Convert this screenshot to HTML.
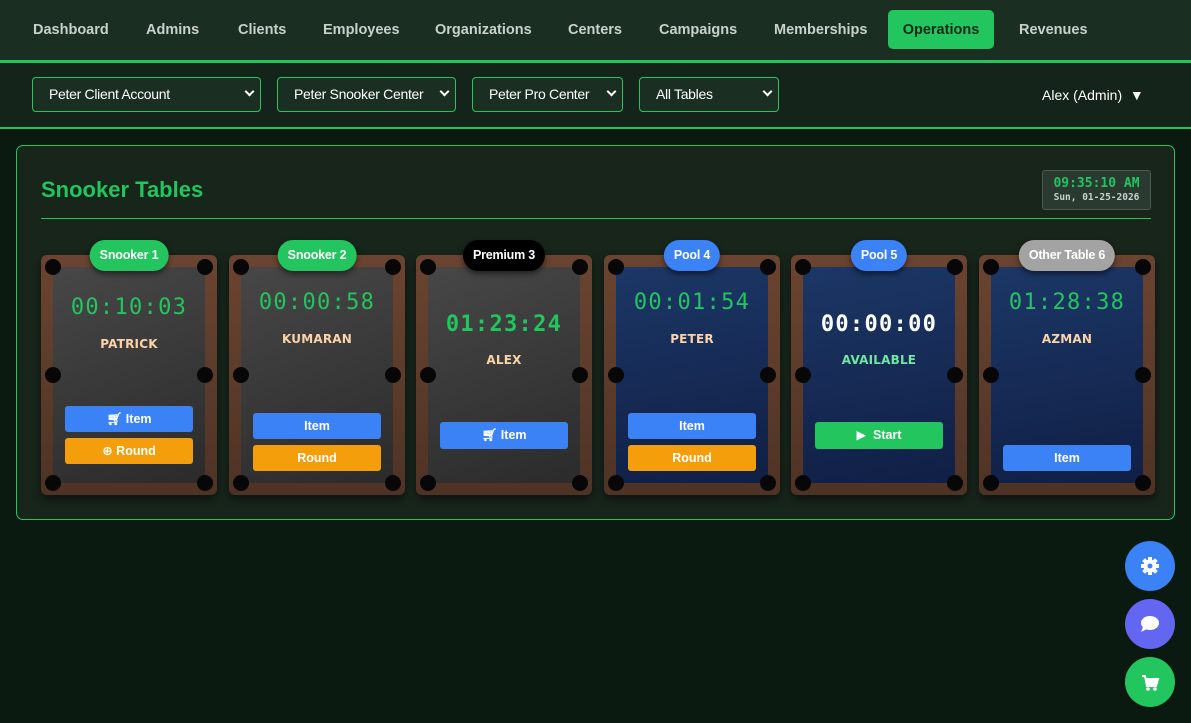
<!DOCTYPE html>
<html><head><meta charset="utf-8"><style>
*{box-sizing:border-box;margin:0;padding:0}
body{width:1191px;height:723px;background:#0b1a10;font-family:"Liberation Sans","DejaVu Sans",sans-serif;position:relative;overflow:hidden}
.nav{position:absolute;left:0;top:0;width:1191px;height:63px;background:#1b2e22;border-bottom:3px solid #22c55e}
.nav span{position:absolute;top:10px;height:39px;line-height:40px;font-family:"Liberation Sans",sans-serif;font-weight:bold;font-size:14.5px;color:#c9d1cc}
.nav .act{background:#22c55e;color:#0f2a18;border-radius:5px;text-align:center}
.bar{position:absolute;left:0;top:63px;width:1191px;height:66px;background:#15241a;border-bottom:2px solid #22c55e}
.sel{position:absolute;top:14px;height:35px;border:1px solid #22c55e;border-radius:4px;background:#1b2e22;color:#fff;font-size:14px;line-height:33px;padding-left:16px;letter-spacing:-0.3px}
.sel i{position:absolute;right:7px;top:13px;width:7px;height:7px;border-right:2px solid #fff;border-bottom:2px solid #fff;transform:rotate(45deg);margin-top:-3px}
.user{position:absolute;left:1042px;top:24px;color:#fff;font-size:14px}
.panel{position:absolute;left:16px;top:145px;width:1159px;height:375px;border:1px solid #22c55e;border-radius:7px;background:#17251b}
.title{position:absolute;left:24px;top:31px;font-family:"Liberation Sans",sans-serif;font-weight:bold;font-size:22px;color:#22c55e}
.hr{position:absolute;left:24px;top:72px;width:1110px;height:1px;background:#22c55e}
.clock{position:absolute;left:1025px;top:24px;width:109px;height:40px;border:1px solid #4b5a50;border-radius:3px;background:#2a3a30;text-align:center;font-family:"DejaVu Sans Mono",monospace}
.clock b{display:block;color:#22c55e;font-size:13px;margin-top:5px;font-weight:bold}
.clock small{display:block;color:#c9d1cc;font-size:9.5px;margin-top:1px;font-weight:bold}
.card{position:absolute;top:255px;width:176px;height:240px;border-radius:6px;background:linear-gradient(#6b4430,#4e3325);box-shadow:0 4px 8px rgba(0,0,0,.5)}
.felt{position:absolute;left:12px;top:12px;right:12px;bottom:12px;background:linear-gradient(160deg,#474747,#2b2b2b)}
.blue .felt{background:linear-gradient(170deg,#1c3766,#101f45)}
.p{position:absolute;width:16px;height:16px;border-radius:50%;background:#070707}
.badge{position:absolute;top:-15px;left:50%;transform:translateX(-50%);height:31px;line-height:31px;padding:0 10px;border-radius:16px;color:#fff;font-weight:bold;font-size:12.5px;white-space:nowrap;box-shadow:0 3px 6px rgba(0,0,0,.5);font-family:"Liberation Sans",sans-serif;letter-spacing:-0.2px}
.tm{position:absolute;left:0;width:176px;text-align:center;font-family:"DejaVu Sans Mono",monospace;font-size:22px;color:#22c55e;letter-spacing:1.3px}
.nm{position:absolute;left:0;width:176px;text-align:center;font-family:"DejaVu Sans",sans-serif;font-weight:bold;font-size:12px;color:#fcd2a8;letter-spacing:0.2px}
.btn{position:absolute;left:24px;width:128px;height:26px;border-radius:3px;color:#fff;font-weight:bold;font-size:12.5px;text-align:center;line-height:26px}
.bl{background:#3b82f6}.or{background:#f59e0b}.gr{background:#22c55e}
.fab{position:absolute;left:1125px;width:50px;height:50px;border-radius:50%}
</style></head><body>
<div class="nav">
<span style="left:33px">Dashboard</span><span style="left:146px">Admins</span><span style="left:238px">Clients</span><span style="left:323px">Employees</span><span style="left:435px">Organizations</span><span style="left:568px">Centers</span><span style="left:659px">Campaigns</span><span style="left:774px">Memberships</span><span class="act" style="left:888px;width:106px">Operations</span><span style="left:1019px">Revenues</span>
</div>
<div class="bar">
<div class="sel" style="left:32px;width:229px">Peter Client Account<i></i></div>
<div class="sel" style="left:277px;width:179px">Peter Snooker Center<i></i></div>
<div class="sel" style="left:472px;width:151px">Peter Pro Center<i></i></div>
<div class="sel" style="left:639px;width:140px">All Tables<i></i></div>
<div class="user">Alex (Admin) &nbsp;▼</div>
</div>
<div class="panel">
<div class="title">Snooker Tables</div>
<div class="hr"></div>
<div class="clock"><b>09:35:10 AM</b><small>Sun, 01-25-2026</small></div>
</div>

<div class="card" style="left:41px"><div class="felt"></div>
<div class="p" style="left:4px;top:4px"></div><div class="p" style="right:4px;top:4px"></div><div class="p" style="left:4px;top:112px"></div><div class="p" style="right:4px;top:112px"></div><div class="p" style="left:4px;bottom:4px"></div><div class="p" style="right:4px;bottom:4px"></div>
<div class="badge" style="background:#22c55e">Snooker 1</div>
<div class="tm" style="top:40px">00:10:03</div><div class="nm" style="top:82px">PATRICK</div>
<div class="btn bl" style="top:151px">🛒︎ Item</div><div class="btn or" style="top:183px">⊕ Round</div></div>

<div class="card" style="left:229px"><div class="felt"></div>
<div class="p" style="left:4px;top:4px"></div><div class="p" style="right:4px;top:4px"></div><div class="p" style="left:4px;top:112px"></div><div class="p" style="right:4px;top:112px"></div><div class="p" style="left:4px;bottom:4px"></div><div class="p" style="right:4px;bottom:4px"></div>
<div class="badge" style="background:#22c55e">Snooker 2</div>
<div class="tm" style="top:35px">00:00:58</div><div class="nm" style="top:77px">KUMARAN</div>
<div class="btn bl" style="top:158px">Item</div><div class="btn or" style="top:190px">Round</div></div>

<div class="card" style="left:416px"><div class="felt"></div>
<div class="p" style="left:4px;top:4px"></div><div class="p" style="right:4px;top:4px"></div><div class="p" style="left:4px;top:112px"></div><div class="p" style="right:4px;top:112px"></div><div class="p" style="left:4px;bottom:4px"></div><div class="p" style="right:4px;bottom:4px"></div>
<div class="badge" style="background:#000">Premium 3</div>
<div class="tm" style="top:57px;font-weight:bold">01:23:24</div><div class="nm" style="top:98px">ALEX</div>
<div class="btn bl" style="top:167px;height:27px">🛒︎ Item</div></div>

<div class="card blue" style="left:604px"><div class="felt"></div>
<div class="p" style="left:4px;top:4px"></div><div class="p" style="right:4px;top:4px"></div><div class="p" style="left:4px;top:112px"></div><div class="p" style="right:4px;top:112px"></div><div class="p" style="left:4px;bottom:4px"></div><div class="p" style="right:4px;bottom:4px"></div>
<div class="badge" style="background:#3b82f6">Pool 4</div>
<div class="tm" style="top:35px">00:01:54</div><div class="nm" style="top:77px">PETER</div>
<div class="btn bl" style="top:158px">Item</div><div class="btn or" style="top:190px">Round</div></div>

<div class="card blue" style="left:791px"><div class="felt"></div>
<div class="p" style="left:4px;top:4px"></div><div class="p" style="right:4px;top:4px"></div><div class="p" style="left:4px;top:112px"></div><div class="p" style="right:4px;top:112px"></div><div class="p" style="left:4px;bottom:4px"></div><div class="p" style="right:4px;bottom:4px"></div>
<div class="badge" style="background:#3b82f6">Pool 5</div>
<div class="tm" style="top:57px;color:#fff;font-weight:bold">00:00:00</div><div class="nm" style="top:98px;color:#6ee7a0">AVAILABLE</div>
<div class="btn gr" style="top:167px;height:27px">▶&nbsp; Start</div></div>

<div class="card blue" style="left:979px"><div class="felt"></div>
<div class="p" style="left:4px;top:4px"></div><div class="p" style="right:4px;top:4px"></div><div class="p" style="left:4px;top:112px"></div><div class="p" style="right:4px;top:112px"></div><div class="p" style="left:4px;bottom:4px"></div><div class="p" style="right:4px;bottom:4px"></div>
<div class="badge" style="background:#a3a3a3">Other Table 6</div>
<div class="tm" style="top:35px">01:28:38</div><div class="nm" style="top:77px">AZMAN</div>
<div class="btn bl" style="top:190px">Item</div></div>

<div class="fab" style="top:541px;background:#3b82f6"><svg width="50" height="50" viewBox="0 0 50 50"><g transform="translate(25 25)" fill="#fff"><circle r="6.5"/><g id="t"><rect x="-2" y="-9" width="4" height="4"/></g><use href="#t" transform="rotate(45)"/><use href="#t" transform="rotate(90)"/><use href="#t" transform="rotate(135)"/><use href="#t" transform="rotate(180)"/><use href="#t" transform="rotate(225)"/><use href="#t" transform="rotate(270)"/><use href="#t" transform="rotate(315)"/><circle r="2.5" fill="#3b82f6"/></g></svg></div>
<div class="fab" style="top:599px;background:#6366f1"><svg width="50" height="50" viewBox="0 0 50 50"><ellipse cx="25" cy="24" rx="9" ry="7" fill="#fff"/><path d="M18 28 L16 33 L22 30 Z" fill="#fff"/></svg></div>
<div class="fab" style="top:657px;background:#22c55e"><svg width="50" height="50" viewBox="0 0 50 50"><path d="M17 19 H20 L22 29 H31 L33 22 H21" fill="#fff" stroke="#fff" stroke-width="2"/><circle cx="23" cy="32" r="1.8" fill="#fff"/><circle cx="30" cy="32" r="1.8" fill="#fff"/></svg></div>
</body></html>
